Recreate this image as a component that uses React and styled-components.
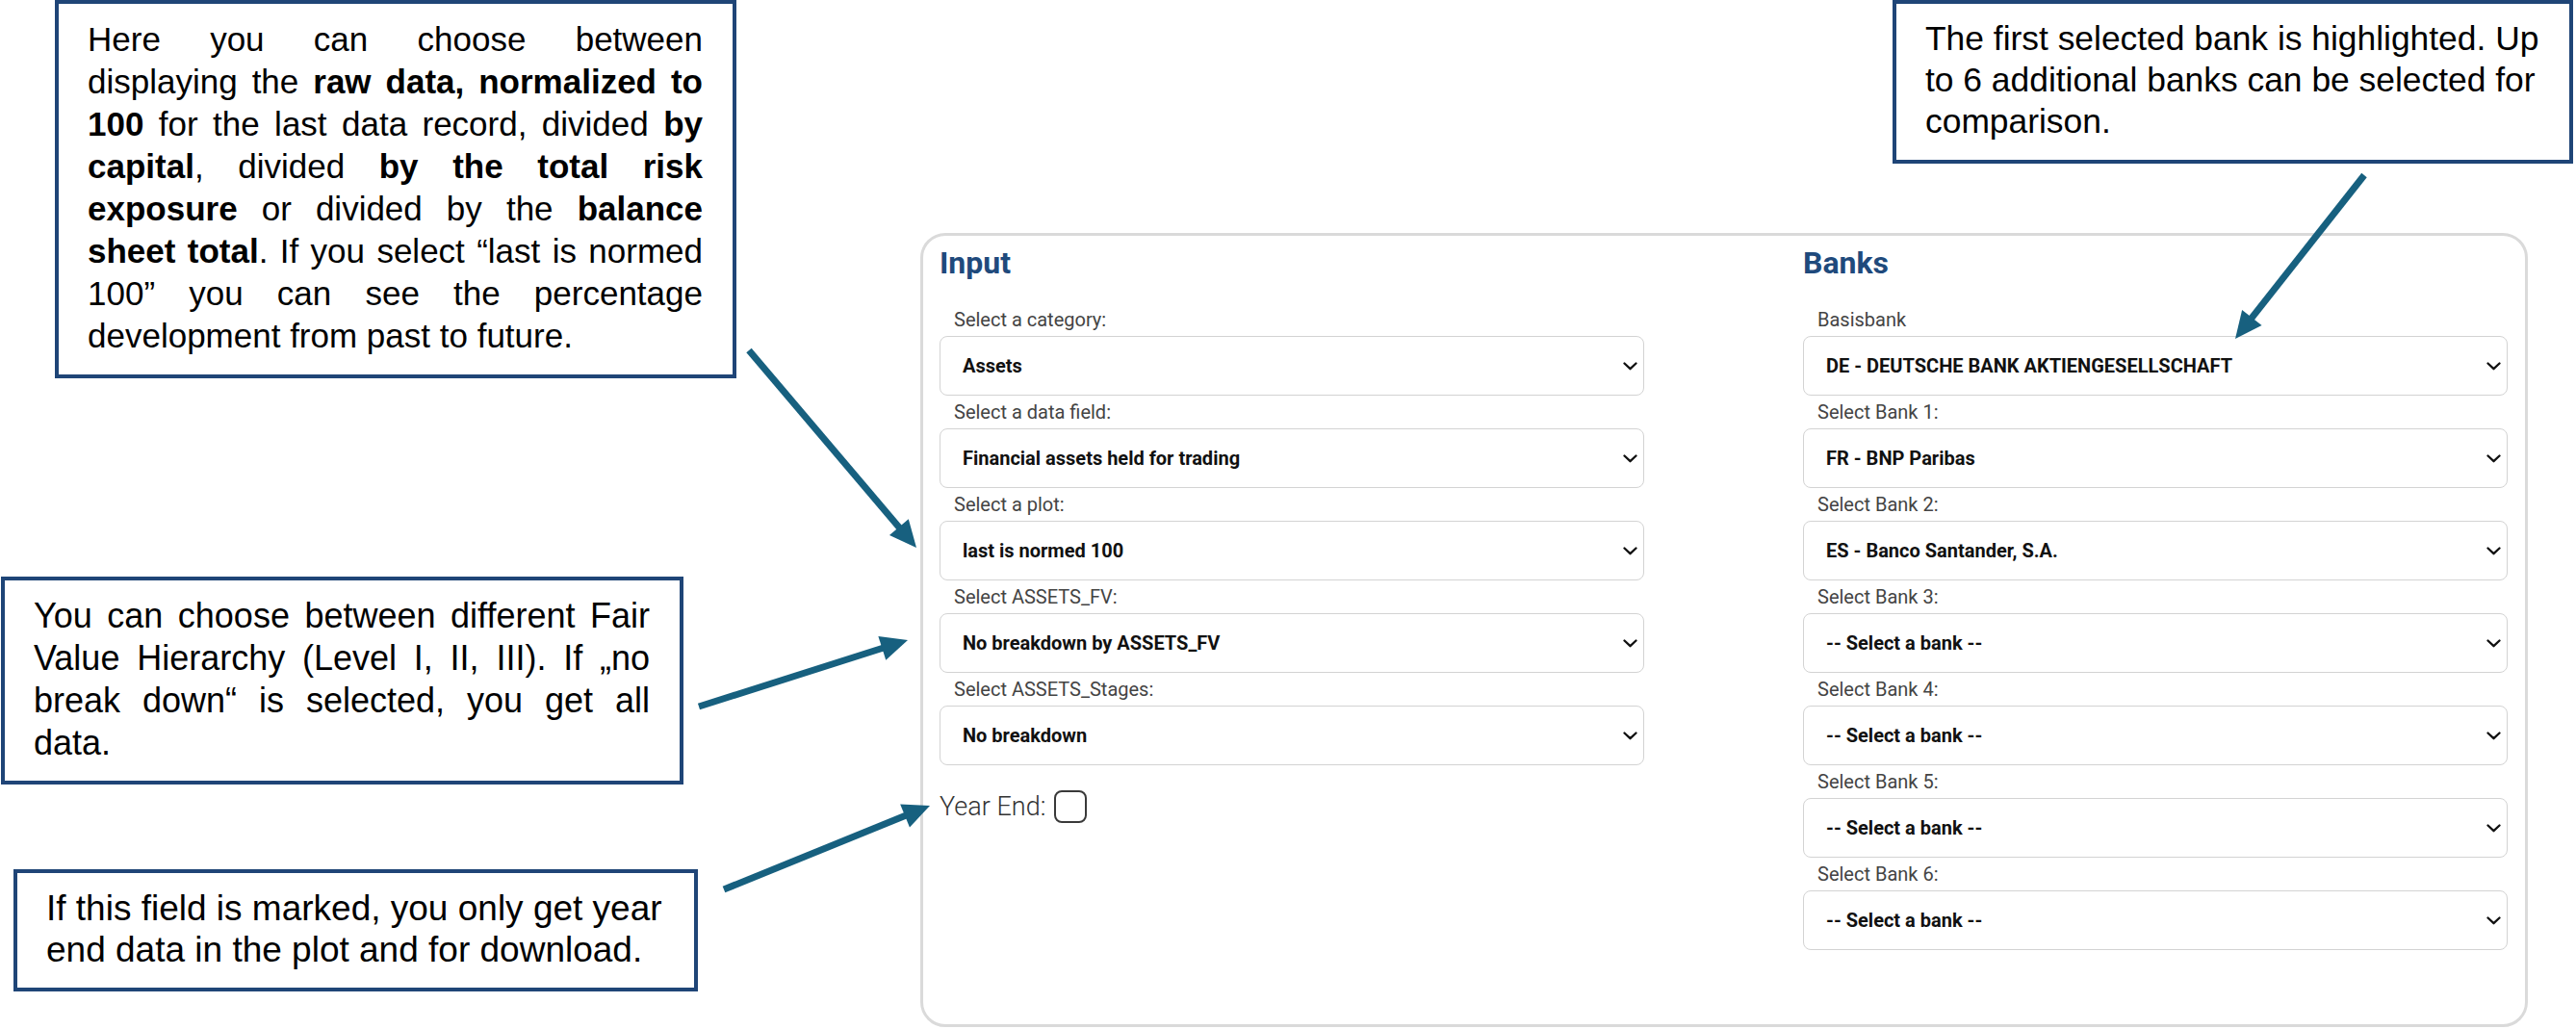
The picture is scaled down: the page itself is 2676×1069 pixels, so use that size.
import styled, { createGlobalStyle } from 'styled-components';

const inputFields = [
    { label: 'Select a category:', value: 'Assets' },
    { label: 'Select a data field:', value: 'Financial assets held for trading' },
    { label: 'Select a plot:', value: 'last is normed 100' },
    { label: 'Select ASSETS_FV:', value: 'No breakdown by ASSETS_FV' },
    { label: 'Select ASSETS_Stages:', value: 'No breakdown' }
];

const bankFields = [
    { label: 'Basisbank', value: 'DE - DEUTSCHE BANK AKTIENGESELLSCHAFT' },
    { label: 'Select Bank 1:', value: 'FR - BNP Paribas' },
    { label: 'Select Bank 2:', value: 'ES - Banco Santander, S.A.' },
    { label: 'Select Bank 3:', value: '-- Select a bank --' },
    { label: 'Select Bank 4:', value: '-- Select a bank --' },
    { label: 'Select Bank 5:', value: '-- Select a bank --' },
    { label: 'Select Bank 6:', value: '-- Select a bank --' }
];

const arrows = [
    { from: [778, 364], to: [952, 569] },
    { from: [726, 734], to: [943, 665] },
    { from: [752, 924], to: [966, 837] },
    { from: [2456, 182], to: [2322, 352] }
];

function Chevron() {
    return (
        <svg width="15" height="9" viewBox="0 0 15 9" fill="none">
            <path d="M1.5 1.5 L7.5 7.2 L13.5 1.5" stroke="#111" strokeWidth="2.3" strokeLinecap="round" strokeLinejoin="round" />
        </svg>
    );
}

function Field({ label, value }) {
    return (
        <FieldBlock>
            <Label>{label}</Label>
            <SelectBox role="combobox">
                <span>{value}</span>
                <Chevron />
            </SelectBox>
        </FieldBlock>
    );
}

const headLength = 28;
const headWidth = 13;

function Arrow({ from, to }) {
    const [x1, y1] = from;
    const [x2, y2] = to;
    const len = Math.hypot(x2 - x1, y2 - y1);
    const ux = (x2 - x1) / len;
    const uy = (y2 - y1) / len;
    const bx = x2 - ux * headLength;
    const by = y2 - uy * headLength;
    const points = [
        `${x2},${y2}`,
        `${bx - uy * headWidth},${by + ux * headWidth}`,
        `${bx + uy * headWidth},${by - ux * headWidth}`
    ].join(' ');

    return (
        <g>
            <line x1={x1} y1={y1} x2={bx + ux * 4} y2={by + uy * 4} />
            <polygon points={points} />
        </g>
    );
}

export default function App() {
    return (
        <>
            <GlobalStyle />
            <Canvas>
                <Panel>
                    <Column>
                        <Heading>Input</Heading>
                        {inputFields.map((f) => <Field key={f.label} {...f} />)}
                        <YearEnd>
                            Year End:
                            <Checkbox role="checkbox" aria-checked="false" />
                        </YearEnd>
                    </Column>
                    <Column>
                        <Heading>Banks</Heading>
                        {bankFields.map((f) => <Field key={f.label} {...f} />)}
                    </Column>
                </Panel>

                <Callout $left={57} $top={0} $width={708} $height={393} $size={35} $lh={44}>
                    <Line $justify>Here you can choose between</Line>
                    <Line $justify>displaying the <b>raw data, normalized to</b></Line>
                    <Line $justify><b>100</b> for the last data record, divided <b>by</b></Line>
                    <Line $justify><b>capital</b>, divided <b>by the total risk</b></Line>
                    <Line $justify><b>exposure</b> or divided by the <b>balance</b></Line>
                    <Line $justify><b>sheet total</b>. If you select “last is normed</Line>
                    <Line $justify>100” you can see the percentage</Line>
                    <Line>development from past to future.</Line>
                </Callout>

                <Callout $left={1} $top={599} $width={709} $height={216} $size={36} $lh={44}>
                    <Line $justify>You can choose between different Fair</Line>
                    <Line $justify>Value Hierarchy (Level I, II, III). If „no</Line>
                    <Line $justify>break down“ is selected, you get all</Line>
                    <Line>data.</Line>
                </Callout>

                <Callout $left={14} $top={903} $width={711} $height={127} $size={37} $lh={43}>
                    <Line>If this field is marked, you only get year</Line>
                    <Line>end data in the plot and for download.</Line>
                </Callout>

                <Callout $left={1966} $top={0} $width={707} $height={170} $size={35.4} $lh={43}>
                    <Line>The first selected bank is highlighted. Up</Line>
                    <Line>to 6 additional banks can be selected for</Line>
                    <Line>comparison.</Line>
                </Callout>

                <ArrowLayer viewBox="0 0 2676 1069">
                    {arrows.map((a, i) => <Arrow key={i} {...a} />)}
                </ArrowLayer>
            </Canvas>
        </>
    );
}

const navy = '#1f4577';
const arrowColor = '#17607f';
const lightBorder = '1px solid #d3d3d3';

const GlobalStyle = createGlobalStyle`
    html, body {
        margin: 0;
        padding: 0;
        background: #fff;
    }
    body {
        font-family: Roboto, "Liberation Sans", Arial, sans-serif;
        color: #111;
    }
`;

const Canvas = styled.div`
    position: relative;
    width: 2676px;
    height: 1069px;
    overflow: hidden;
    box-sizing: border-box;
    padding: 242px 0 0 956px;
    background: #fff;
`;

const Panel = styled.section`
    box-sizing: border-box;
    width: 1670px;
    height: 825px;
    padding: 8px 18px 0 17px;

    display: grid;
    grid-template-columns: 732px 732px;
    justify-content: space-between;
    align-content: start;

    border: 3px solid #dadada;
    border-radius: 26px;
`;

const Column = styled.div`
    display: flex;
    flex-flow: column;
    gap: 5px;
`;

const Heading = styled.h2`
    margin: 0 0 22px;
    font-family: Roboto, sans-serif;
    font-size: 32px;
    font-weight: 700;
    line-height: 40px;
    color: #1f4a7c;
`;

const FieldBlock = styled.div`
    display: flex;
    flex-flow: column;
    gap: 5px;
`;

const Label = styled.div`
    padding-left: 15px;
    font-family: Roboto, sans-serif;
    font-size: 20px;
    font-weight: 400;
    line-height: 24px;
    color: #444;
`;

const SelectBox = styled.div`
    box-sizing: border-box;
    height: 62px;
    padding: 0 6px 0 23px;

    display: flex;
    align-items: center;
    justify-content: space-between;

    border: ${lightBorder};
    border-radius: 8px;
    background: #fff;

    font-family: Roboto, sans-serif;
    font-size: 20px;
    font-weight: 700;
    color: #111;
`;

const YearEnd = styled.label`
    margin-top: 21px;
    display: flex;
    align-items: center;
    gap: 9px;

    font-family: Roboto, sans-serif;
    font-size: 27px;
    font-weight: 300;
    line-height: 34px;
    color: #333;
`;

const Checkbox = styled.span`
    box-sizing: border-box;
    width: 34px;
    height: 34px;
    border: 2px solid #3a3a3a;
    border-radius: 8px;
    background: #fff;
`;

const Callout = styled.div`
    position: absolute;
    left: ${(p) => p.$left}px;
    top: ${(p) => p.$top}px;
    width: ${(p) => p.$width}px;
    height: ${(p) => p.$height}px;
    box-sizing: border-box;
    padding: 15px 31px 0 30px;

    border: 4px solid ${navy};
    background: #fff;

    font-family: "Liberation Sans", Arial, sans-serif;
    font-size: ${(p) => p.$size}px;
    line-height: ${(p) => p.$lh}px;
    color: #000;

    b {
        font-weight: 700;
    }
`;

const Line = styled.span`
    display: block;
    white-space: ${(p) => (p.$justify ? 'normal' : 'nowrap')};
    text-align: ${(p) => (p.$justify ? 'justify' : 'left')};
    text-align-last: ${(p) => (p.$justify ? 'justify' : 'left')};
`;

const ArrowLayer = styled.svg`
    position: absolute;
    inset: 0;
    width: 2676px;
    height: 1069px;
    pointer-events: none;

    line {
        stroke: ${arrowColor};
        stroke-width: 7;
    }
    polygon {
        fill: ${arrowColor};
    }
`;
